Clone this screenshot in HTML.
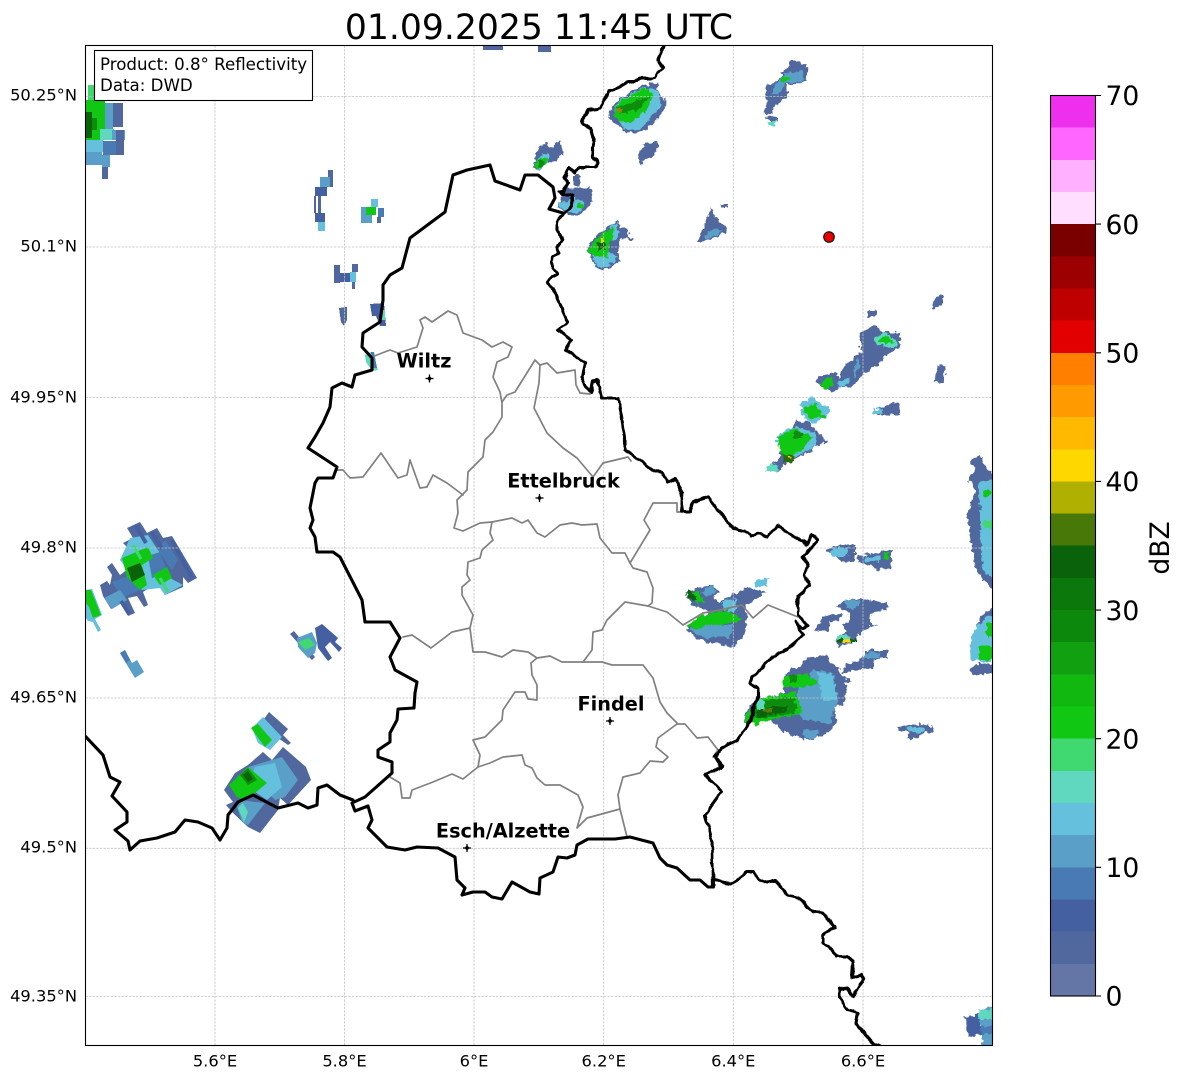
<!DOCTYPE html>
<html><head><meta charset="utf-8"><style>
html,body{margin:0;padding:0;background:#fff}
svg{display:block}
text{font-family:"DejaVu Sans","Liberation Sans",sans-serif;fill:#000}
.a{fill:#50689e}.b{fill:#4a7ab4}.c{fill:#5a9fc8}.d{fill:#64c0dc}.e{fill:#60d8c0}.f{fill:#40d870}.g{fill:#10c814}.h{fill:#0e8c0e}.i{fill:#0a620a}.n{fill:#4460a0}
.tk{font-size:16.3px}.cb{font-size:26.6px}.lb{font-size:19.3px;font-weight:bold}
</style></head><body>
<svg width="1184" height="1081" viewBox="0 0 1184 1081" xmlns="http://www.w3.org/2000/svg">
<defs>
<clipPath id="ax"><rect x="85.5" y="45.5" width="907" height="1000"/></clipPath>
<filter id="rough" x="0" y="0" width="1184" height="1081" filterUnits="userSpaceOnUse" color-interpolation-filters="sRGB">
<feTurbulence type="fractalNoise" baseFrequency="0.2" numOctaves="2" seed="4" result="n"/>
<feDisplacementMap in="SourceGraphic" in2="n" scale="7" xChannelSelector="R" yChannelSelector="G"/>
</filter>
<filter id="river" x="0" y="0" width="1184" height="1081" filterUnits="userSpaceOnUse" color-interpolation-filters="sRGB">
<feTurbulence type="fractalNoise" baseFrequency="0.09" numOctaves="2" seed="9" result="n"/>
<feDisplacementMap in="SourceGraphic" in2="n" scale="5" xChannelSelector="R" yChannelSelector="G"/>
</filter>
</defs>
<text x="539" y="39" text-anchor="middle" style="font-size:34.6px">01.09.2025 11:45 UTC</text>

<g clip-path="url(#ax)">
<!-- top-left cell -->
<g shape-rendering="crispEdges">
<rect class="f" x="88" y="85" width="6" height="16"/>
<rect class="a" x="112" y="103" width="11" height="24"/>
<rect class="c" x="105" y="103" width="8" height="37"/>
<rect class="g" x="85" y="100" width="20" height="40"/>
<rect class="i" x="85" y="112" width="7" height="26"/>
<rect class="h" x="92" y="118" width="5" height="12"/>
<rect class="e" x="100" y="129" width="14" height="11"/>
<rect class="c" x="112" y="130" width="13" height="10"/>
<rect class="d" x="85" y="140" width="18" height="12"/>
<rect class="b" x="103" y="141" width="13" height="14"/>
<rect class="a" x="116" y="130" width="8" height="25"/>
<rect class="c" x="85" y="152" width="17" height="13"/>
<rect class="c" x="102" y="155" width="8" height="12"/>
<rect class="a" x="102" y="167" width="6" height="12"/>
<!-- streak -->
<rect class="a" x="328" y="170" width="5" height="17"/>
<rect class="c" x="320" y="177" width="10" height="10"/>
<rect class="n" x="315" y="187" width="12" height="9"/>
<rect class="a" x="314" y="196" width="2" height="17"/>
<rect class="a" x="318" y="196" width="3" height="17"/>
<rect class="n" x="315" y="213" width="10" height="9"/>
<rect class="d" x="318" y="222" width="7" height="9"/>
<!-- small -->
<rect class="c" x="361" y="207" width="7" height="16"/>
<rect class="d" x="371" y="199" width="7" height="8"/>
<rect class="b" x="378" y="208" width="6" height="9"/>
<rect class="a" x="377" y="217" width="4" height="6"/>
<rect class="c" x="368" y="215" width="4" height="8"/>
<rect class="g" x="366" y="207" width="10" height="8"/>
<rect class="a" x="334" y="265" width="6" height="18"/>
<rect class="n" x="340" y="273" width="10" height="9"/>
<rect class="d" x="350" y="272" width="6" height="10"/>
<rect class="a" x="352" y="264" width="6" height="8"/>
<rect class="a" x="352" y="282" width="3" height="7"/>
<polygon class="a" points="339,308 347,307 347,320 344,326 341,322"/>
<polygon class="n" points="370,304 384,303 386,326 380,326 376,316 372,316"/>
<rect class="e" x="381" y="310" width="4" height="10"/>
<polygon class="e" points="365,355 371,352 378,370 372,371 366,362"/>
<polygon class="b" points="371,352 374,352 377,368 373,368"/>
</g>

<!-- west big cell -->
<polygon class="a" points="127,528 140,522 147,533 157,528 163,538 172,536 197,578 188,583 183,577 183,587 165,595 157,583 143,592 148,605 144,607 137,596 128,598 135,613 128,616 122,602 111,609 103,596 100,585 107,581 110,585 112,575 107,567 112,563 120,575 128,569 120,560 130,550 123,543 133,538"/>
<polygon class="b" points="165,540 178,560 172,570 158,550"/>
<polygon class="d" points="130,538 148,535 160,553 168,577 183,585 165,595 160,588 142,590 128,570 120,560"/>
<polygon class="b" points="148,556 160,552 167,572 152,578"/>
<polygon class="b" points="112,582 132,575 140,590 122,598"/>
<polygon class="c" points="104,598 120,590 127,600 112,609"/>
<polygon class="g" points="122,558 148,547 153,558 142,565 147,585 140,590 127,577"/>
<polygon class="i" points="127,568 140,563 145,575 132,582"/>
<polygon class="g" points="153,575 167,567 172,578 160,585"/>
<path d="M136,526L146,543M172,540L192,578M121,601L129,614M152,532L162,549" stroke="#4460a0" stroke-width="4" fill="none"/>
<path d="M133,545L141,559M160,578L168,592" stroke="#40d870" stroke-width="3" fill="none"/>
<polygon class="d" points="85,590 92,589 102,615 95,619 101,630 98,632 93,622 88,621 85,617"/>
<polygon class="g" points="85,590 91,590 101,615 93,618 89,607 85,602"/>
<polygon class="c" points="120,653 125,650 132,663 137,660 144,672 135,678 127,665"/>
<polygon class="b" points="120,653 125,650 130,660 126,663"/>
<!-- cell near 315,640 -->
<polygon class="a" points="290,634 294,631 315,657 312,660 305,653 298,643"/>
<polygon class="n" points="315,628 322,624 338,638 335,642 342,648 339,652 330,642 325,647 332,658 328,661 318,648"/>
<polygon class="c" points="297,638 312,632 317,643 315,653 308,658 298,647"/>
<polygon class="f" points="298,642 309,638 315,645 305,650"/>
<!-- SW big cell -->
<polygon class="a" points="269,712 288,729 283,735 291,743 288,745 278,738 270,745 262,745 255,735 252,727 262,722"/>
<polygon class="d" points="252,728 263,717 282,737 270,750 258,743"/>
<polygon class="g" points="251,728 258,724 272,740 265,747"/>
<polygon class="a" points="224,790 235,773 248,765 263,752 272,760 283,747 306,767 311,780 288,805 280,798 278,810 260,833 248,827 232,812 226,805 233,802"/>
<polygon class="c" points="248,767 282,757 298,780 285,797 275,800 265,790"/>
<polygon class="d" points="255,767 275,763 282,787 267,800 248,787"/>
<polygon class="g" points="229,785 248,767 267,783 255,793 245,800 237,797"/>
<polygon class="h" points="240,775 248,768 257,780 248,785"/>
<polygon class="i" points="243,775 248,771 253,779 248,782"/>
<polygon class="c" points="237,807 242,800 255,802 265,803 248,825 242,822"/>
<polygon class="e" points="238,808 243,803 248,812 244,822"/>

<rect class="a" x="483" y="45" width="20" height="5"/>
<rect class="a" x="538" y="45" width="13" height="7"/>
<g filter="url(#rough)">
<!-- north cell -->
<polygon class="a" points="609,113 617,100 643,85 658,82 658,92 667,102 660,117 643,132 627,133 618,125 610,120"/>
<polygon class="d" points="613,112 620,100 645,87 657,90 662,105 640,130 625,130"/>
<polygon class="g" points="613,113 622,100 647,87 654,97 645,112 630,123 620,122"/>
<polygon class="h" points="618,107 627,105 650,95 640,108 627,113 619,113"/>
<rect x="618" y="108" width="4" height="4" fill="#a08010"/>
<polygon class="a" points="637,155 645,143 658,142 658,153 647,158 640,164"/>
<polygon class="a" points="533,167 538,147 547,143 550,148 560,141 563,153 555,162 548,163 538,172"/>
<polygon class="d" points="535,163 540,155 549,153 548,163 538,172"/>
<polygon class="g" points="534,165 540,157 548,158 547,164 537,170"/>
<rect class="h" x="538" y="160" width="6" height="6"/>
<polygon class="a" points="557,205 568,188 590,187 592,203 580,215 565,215"/>
<polygon class="d" points="557,204 573,198 585,202 580,212 567,213"/>
<rect class="g" x="577" y="203" width="6" height="4"/>
<rect class="a" x="573" y="175" width="7" height="10"/>
<polygon class="a" points="587,248 595,237 612,225 618,220 620,227 629,228 629,237 619,240 619,260 610,268 597,269 592,258"/>
<polygon class="d" points="592,255 610,252 618,258 608,266 597,266"/>
<polygon class="d" points="612,226 618,222 618,240 608,240"/>
<polygon class="g" points="588,250 600,235 615,227 610,243 607,257 595,257"/>
<rect class="i" x="597" y="242" width="8" height="8"/>
<rect x="601" y="238" width="3" height="4" fill="#ffd700"/>
<rect class="a" x="628" y="237" width="4" height="4"/>
<polygon class="a" points="698,242 702,230 712,208 715,217 727,228 725,233 705,242"/>
<polygon class="c" points="705,235 715,228 722,232 705,240"/>
<rect class="a" x="720" y="204" width="7" height="3"/>
<polygon class="a" points="765,88 780,77 792,60 808,65 807,82 787,85 787,97 775,105 772,115 764,112 768,97 765,93"/>
<polygon class="c" points="775,85 785,73 800,70 805,80 785,84 778,95 770,93"/>
<rect class="g" x="781" y="77" width="9" height="4"/>
<polygon class="a" points="766,118 776,115 777,122 772,122"/>
<rect class="e" x="769" y="122" width="6" height="4"/>
<!-- NE cells -->
<rect class="a" x="867" y="310" width="9" height="7"/>
<polygon class="a" points="842,368 860,353 860,333 875,325 882,332 900,332 900,347 887,355 878,365 860,377 852,387 840,387 832,392 817,383 818,377 835,373 840,378"/>
<polygon class="c" points="853,372 858,357 860,368 855,377"/>
<polygon class="g" points="820,383 832,375 833,387 825,390"/>
<polygon class="d" points="838,382 850,377 848,385 840,387"/>
<polygon class="e" points="873,340 884,332 898,342 896,347 877,345"/>
<polygon class="g" points="879,340 886,335 895,342 885,344"/>
<polygon class="a" points="932,308 937,295 943,295 943,303 935,309"/>
<polygon class="a" points="934,383 940,363 946,368 942,383"/>
<polygon class="a" points="873,412 885,405 900,403 900,415 893,415 878,415"/>
<rect class="d" x="873" y="409" width="9" height="5"/>
<polygon class="a" points="767,467 775,463 783,450 775,437 793,427 795,420 810,423 817,432 828,443 815,447 800,457 787,462 778,473 773,470"/>
<polygon class="d" points="799,405 813,397 831,410 823,418 815,423 807,422"/>
<polygon class="g" points="802,407 815,403 825,417 810,418"/>
<polygon class="d" points="775,437 793,427 815,432 817,445 800,455 787,460 782,450"/>
<polygon class="g" points="777,438 793,428 813,437 800,453 783,457"/>
<rect class="h" x="793" y="432" width="10" height="6"/>
<rect x="783" y="455" width="10" height="7" fill="#2a6a0a"/>
<rect x="787" y="457" width="3" height="2" fill="#ffd700"/>
<rect class="e" x="767" y="465" width="11" height="7"/>
<!-- right edge -->
<polygon class="a" points="970,460 980,455 985,467 998,480 998,595 983,580 975,567 973,553 968,523 968,513 975,490 968,480 975,470"/>
<polygon class="d" points="978,482 998,478 998,580 983,573 980,523 980,510"/>
<rect class="g" x="983" y="490" width="7" height="7"/>
<rect class="f" x="983" y="520" width="15" height="8"/>
<polygon class="a" points="985,612 998,608 998,625 975,630 978,622"/>
<polygon class="d" points="998,610 977,625 970,643 972,660 982,662 998,660"/>
<rect class="g" x="979" y="647" width="19" height="13"/>
<rect class="g" x="987" y="623" width="11" height="14"/>
<polygon class="a" points="969,670 980,663 998,665 998,673 973,675"/>
<!-- Mid east cells -->
<polygon class="a" points="685,593 702,587 713,585 720,593 713,597 722,607 713,613 693,605"/>
<polygon class="c" points="700,592 712,586 716,592 706,597"/>
<polygon class="g" points="690,595 698,592 705,602 697,604"/>
<polygon class="i" points="685,593 690,590 698,600 693,602"/>
<polygon class="a" points="725,598 748,588 767,592 753,600 745,607 747,625 745,633 735,647 700,640 687,630"/>
<rect class="d" x="755" y="579" width="13" height="8"/>
<rect class="d" x="723" y="600" width="14" height="10"/>
<polygon class="g" points="687,625 703,615 730,610 742,620 730,622 710,628 697,632"/>
<polygon class="c" points="690,630 710,625 733,625 730,638 703,638"/>
<polygon class="a" points="835,607 843,602 857,598 887,603 888,610 870,612 870,625 877,625 865,630 857,637 857,642 837,647 836,638 847,632 842,625 850,620 850,612 837,608"/>
<polygon class="a" points="815,630 823,617 842,613 842,618 830,623 828,632"/>
<rect class="c" x="846" y="600" width="13" height="8"/>
<rect class="e" x="837" y="635" width="13" height="4"/>
<rect class="i" x="837" y="639" width="20" height="4"/>
<rect x="843" y="639" width="7" height="4" fill="#ffd700"/>
<polygon class="a" points="852,662 865,657 865,650 887,650 887,657 873,660 873,667 843,673 843,667"/>
<rect class="c" x="865" y="652" width="15" height="6"/>
<polygon class="a" points="778,727 770,720 770,717 760,723 745,723 745,712 755,700 783,693 783,677 792,668 800,667 807,657 828,655 828,660 838,668 843,677 852,680 845,683 845,703 835,707 837,723 828,733 810,740 797,738 787,733"/>
<polygon class="c" points="797,690 813,670 833,672 838,700 830,723 803,720 797,710"/>
<polygon class="d" points="817,673 833,673 837,700 823,703 820,687"/>
<rect class="c" x="803" y="730" width="15" height="8"/>
<polygon class="g" points="783,677 805,673 820,683 802,688 783,687"/>
<rect class="h" x="790" y="675" width="8" height="7"/>
<polygon class="g" points="765,697 795,692 803,713 770,720 757,725 745,722 747,712"/>
<polygon class="h" points="765,700 795,697 796,713 770,717 753,717 753,712"/>
<polygon class="i" points="755,712 770,707 790,707 780,713 757,717"/>
<rect x="763" y="708" width="9" height="5" fill="#5a7a0a"/>
<rect class="e" x="757" y="700" width="7" height="10"/>
<polygon class="a" points="898,727 918,724 933,726 933,732 920,734 918,739 908,739 907,732 898,732"/>
<rect class="d" x="907" y="727" width="18" height="5"/>
<polygon class="a" points="826,550 840,545 855,545 855,560 842,563 835,555"/>
<rect class="d" x="832" y="548" width="16" height="8"/>
<polygon class="a" points="857,556 875,553 891,550 891,568 880,570 868,565 858,562"/>
<rect class="d" x="865" y="556" width="15" height="6"/>
<rect class="g" x="884" y="553" width="5" height="6"/>
<!-- bottom right -->
<polygon class="n" points="965,1017 980,1014 980,1035 968,1038"/>
<polygon class="c" points="978,1010 998,1007 998,1050 983,1050 981,1030"/>
<rect class="e" x="978" y="1010" width="20" height="9"/>
<rect class="b" x="980" y="1026" width="18" height="8"/>
</g>
</g>

<!-- gridlines -->
<g stroke="#c2c2c2" stroke-width="0.8" stroke-dasharray="2.4 1.2" fill="none">
<path d="M215 45.5V1045.5M344.5 45.5V1045.5M474 45.5V1045.5M603.7 45.5V1045.5M733.3 45.5V1045.5M863 45.5V1045.5"/>
<path d="M85.5 96.5H992.5M85.5 247H992.5M85.5 397.5H992.5M85.5 548H992.5M85.5 698H992.5M85.5 848.3H992.5M85.5 996.5H992.5"/>
</g>

<g clip-path="url(#ax)" fill="none" stroke-linejoin="round" stroke-linecap="round">
<!-- district lines -->
<g stroke="#808080" stroke-width="1.7">
<path d="M372,357 382,353 390,350 398,353 417,347 423,328 420,320 425,317 432,322 448,311 457,315 463,333 482,340 492,347 503,342 512,347 508,357 497,362 493,377 500,392 502,403 502,417 493,432 485,440 483,457 468,472 467,490 457,500 458,513 454,528 463,531 480,523 492,522 512,518 522,523 528,520 537,533 545,537 560,525 572,523 582,525 597,524 600,538 612,553 625,553 630,563 650,530 644,520 653,503 677,503 677,512 683,512"/>
<path d="M502,402 507,395 515,392 535,360 540,365 539,383 534,408 547,433 563,448 577,458 593,477 603,463 628,457 631,461"/>
<path d="M540,365 547,363 557,373 575,370 576,385 580,393 590,394"/>
<path d="M337,470 343,470 350,478 363,477 381,453 398,478 407,475 410,460 420,488 427,487 433,475 447,483 463,495"/>
<path d="M630,563 633,568 647,572 653,588 652,603 648,606 625,602 607,620 602,630 593,632 592,650 583,662"/>
<path d="M648,606 667,612 683,625 703,613 720,610 742,605 753,618 768,605 798,617"/>
<path d="M492,522 490,533 493,540 482,550 480,558 468,562 467,575 470,580 462,587 462,595 473,615 470,628 452,632 431,648 412,635 403,637"/>
<path d="M470,628 473,652 485,652 502,657 513,650 528,652 537,658 550,656 562,662 583,662 602,662 612,665 643,665 653,678 660,702 667,713 677,723"/>
<path d="M537,658 531,663 532,675 537,685 537,700 528,699 525,692 515,692 503,710 502,720 485,737 473,740 480,755 478,767 463,779 452,774 433,782 412,790 410,798 402,798 400,783 390,777"/>
<path d="M478,767 490,763 503,757 522,755 525,765 532,768 537,778 545,785 560,785 578,795 583,807 577,828 587,818 620,809 627,837"/>
<path d="M620,809 618,795 623,777 640,773 650,761 663,762 668,757 656,747 658,738 677,724 685,724 697,738 708,737 718,750 713,757"/>
</g>
<!-- national borders -->
<g stroke="#000" stroke-width="3.1">
<path filter="url(#river)" d="M664,45 660,50 658,60 663,67 658,72 655,78 642,78 635,82 627,82 617,88 608,92 605,98 600,108 588,110 586,115 582,123 590,128 593,138 593,157 598,163 595,167 580,167 575,173 569,168 565,178 568,183 563,192 559,192 563,195 572,195 573,205 570,210 563,213 558,220 558,230 562,240 557,247 558,253 553,257 552,267 557,273 550,280 548,284 553,288 562,310 568,323 558,330 571,340 565,350 585,363 582,377 590,393 593,382 598,380 602,398 618,398 622,420 625,437 625,450 640,460 653,470 663,473 667,482 675,478 682,493 683,503 682,512 690,512 693,502 708,497 733,528 748,532 752,537 758,533 768,537 778,525 793,537 803,540 807,545 811,535 818,540 803,557 808,567 805,575 810,585 798,595 798,615 808,625 803,628 795,622 803,635 783,652 772,657 752,677 750,685 758,688 758,697 750,720 737,740 722,748 715,757 722,767 717,770 705,775 722,792 705,815 712,840 713,887"/>
<path d="M713,887 708,887 700,880 690,880 677,868 667,865 660,858 653,843 630,837 615,839 588,839 577,845 575,855 567,858 558,857 553,872 540,878 539,894 530,892 512,882 502,899 492,897 485,892 473,892 462,895 465,888 457,880 455,857 438,848 417,847 405,850 387,847 368,828 372,820 368,806 355,811 352,803 365,797 392,773 392,762 378,757 378,750 390,742 390,733 397,720 398,709 414,708 415,693 417,682 395,670 390,657 400,638 390,622 365,622 362,600 340,557 333,552 317,552 315,537 310,528 313,520 310,508 315,483 318,478 333,478 337,467 308,448 315,437 323,423 330,407 332,388 342,383 352,387 355,375 372,370 372,358 362,347 363,333 380,322 383,300 383,285 390,275 402,268 410,238 445,212 453,175 467,170 490,165 495,181 520,190 525,175 538,175 553,187 555,198 549,209 563,213"/>
<path filter="url(#river)" d="M713,880 730,883 740,878 745,872 753,872 760,880 768,883 775,881 788,895 798,897 813,912 823,913 835,927 823,935 823,943 830,947 837,957 847,957 853,962 852,978 860,975 864,979 854,996 847,988 840,989 840,998 848,1010 858,1013 856,1023 873,1043 880,1047"/>
<path d="M85,736 103,755 110,777 120,782 112,796 127,812 127,822 115,830 128,841 130,850 140,841 157,838 175,832 185,820 198,822 212,828 220,840 227,828 228,815 238,802 253,795 278,808 298,803 308,808 317,805 318,788 327,785 340,795 353,800"/>
</g>
</g>

<!-- red marker -->
<circle cx="829" cy="237" r="5.3" fill="#e60000" stroke="#000" stroke-width="1"/>

<!-- city markers -->
<g stroke="#000" stroke-width="1.3" fill="#000">
<path d="M425.5 378.5h8M429.5 374.5v8"/><circle cx="429.5" cy="378.5" r="1.2"/>
<path d="M535.5 498h8M539.5 494v8"/><circle cx="539.5" cy="498" r="1.2"/>
<path d="M606 721h8M610 717v8"/><circle cx="610" cy="721" r="1.2"/>
<path d="M463 848h8M467 844v8"/><circle cx="467" cy="848" r="1.2"/>
</g>
<text class="lb" x="424" y="367.5" text-anchor="middle">Wiltz</text>
<text class="lb" x="563.5" y="487.7" text-anchor="middle">Ettelbruck</text>
<text class="lb" x="611" y="710.7" text-anchor="middle">Findel</text>
<text class="lb" x="503" y="837.7" text-anchor="middle">Esch/Alzette</text>

<!-- axes frame -->
<rect x="85.5" y="45.5" width="907" height="1000" fill="none" stroke="#000" stroke-width="1.1"/>

<!-- info box -->
<rect x="94.5" y="50.5" width="218" height="50" fill="#fff" stroke="#000" stroke-width="1.1"/>
<text x="100" y="70" style="font-size:16.65px">Product: 0.8° Reflectivity</text>
<text x="100" y="91" style="font-size:16.65px">Data: DWD</text>

<!-- lat labels -->
<g text-anchor="end">
<text class="tk" x="77" y="100.5">50.25°N</text>
<text class="tk" x="77" y="251.5">50.1°N</text>
<text class="tk" x="77" y="402.5">49.95°N</text>
<text class="tk" x="77" y="552.5">49.8°N</text>
<text class="tk" x="77" y="702.5">49.65°N</text>
<text class="tk" x="77" y="852.5">49.5°N</text>
<text class="tk" x="77" y="1001.5">49.35°N</text>
</g>
<g text-anchor="middle">
<text class="tk" x="215" y="1066.5">5.6°E</text>
<text class="tk" x="344.5" y="1066.5">5.8°E</text>
<text class="tk" x="474" y="1066.5">6°E</text>
<text class="tk" x="603.7" y="1066.5">6.2°E</text>
<text class="tk" x="733.3" y="1066.5">6.4°E</text>
<text class="tk" x="863" y="1066.5">6.6°E</text>
</g>

<!-- colorbar -->
<g shape-rendering="crispEdges">
<rect x="1050.5" y="95.5" width="45" height="33" fill="#ee30ee"/>
<rect x="1050.5" y="127.7" width="45" height="33" fill="#ff66ff"/>
<rect x="1050.5" y="159.8" width="45" height="33" fill="#ffb0ff"/>
<rect x="1050.5" y="192" width="45" height="33" fill="#ffdeff"/>
<rect x="1050.5" y="224.1" width="45" height="33" fill="#7a0000"/>
<rect x="1050.5" y="256.3" width="45" height="33" fill="#9c0000"/>
<rect x="1050.5" y="288.5" width="45" height="33" fill="#be0000"/>
<rect x="1050.5" y="320.6" width="45" height="33" fill="#e20000"/>
<rect x="1050.5" y="352.8" width="45" height="33" fill="#ff7f00"/>
<rect x="1050.5" y="384.9" width="45" height="33" fill="#ff9b00"/>
<rect x="1050.5" y="417.1" width="45" height="33" fill="#ffb900"/>
<rect x="1050.5" y="449.3" width="45" height="33" fill="#ffd700"/>
<rect x="1050.5" y="481.4" width="45" height="33" fill="#b0b000"/>
<rect x="1050.5" y="513.6" width="45" height="33" fill="#487808"/>
<rect x="1050.5" y="545.7" width="45" height="33" fill="#0a620a"/>
<rect x="1050.5" y="577.9" width="45" height="33" fill="#0a780a"/>
<rect x="1050.5" y="610.1" width="45" height="33" fill="#0c880c"/>
<rect x="1050.5" y="642.2" width="45" height="33" fill="#10a010"/>
<rect x="1050.5" y="674.4" width="45" height="33" fill="#10b810"/>
<rect x="1050.5" y="706.5" width="45" height="33" fill="#10c814"/>
<rect x="1050.5" y="738.7" width="45" height="33" fill="#40d870"/>
<rect x="1050.5" y="770.9" width="45" height="33" fill="#60d8c0"/>
<rect x="1050.5" y="803" width="45" height="33" fill="#64c0dc"/>
<rect x="1050.5" y="835.2" width="45" height="33" fill="#5a9fc8"/>
<rect x="1050.5" y="867.3" width="45" height="33" fill="#4a7ab4"/>
<rect x="1050.5" y="899.5" width="45" height="33" fill="#4460a0"/>
<rect x="1050.5" y="931.7" width="45" height="33" fill="#50689e"/>
<rect x="1050.5" y="963.8" width="45" height="32.2" fill="#6476a6"/>
</g>
<rect x="1050.5" y="95.5" width="45" height="900.5" fill="none" stroke="#000" stroke-width="1.1"/>
<path d="M1095.5 95.5h5.5M1095.5 224.1h5.5M1095.5 352.8h5.5M1095.5 481.4h5.5M1095.5 610.1h5.5M1095.5 738.7h5.5M1095.5 867.3h5.5M1095.5 996h5.5" stroke="#000" stroke-width="1.1" fill="none"/>
<text class="cb" x="1105.5" y="105">70</text>
<text class="cb" x="1105.5" y="234">60</text>
<text class="cb" x="1105.5" y="362.5">50</text>
<text class="cb" x="1105.5" y="491">40</text>
<text class="cb" x="1105.5" y="620">30</text>
<text class="cb" x="1105.5" y="748.5">20</text>
<text class="cb" x="1105.5" y="877">10</text>
<text class="cb" x="1105.5" y="1005.5">0</text>
<text class="cb" transform="translate(1169,548) rotate(-90)" text-anchor="middle">dBZ</text>
</svg>
</body></html>
